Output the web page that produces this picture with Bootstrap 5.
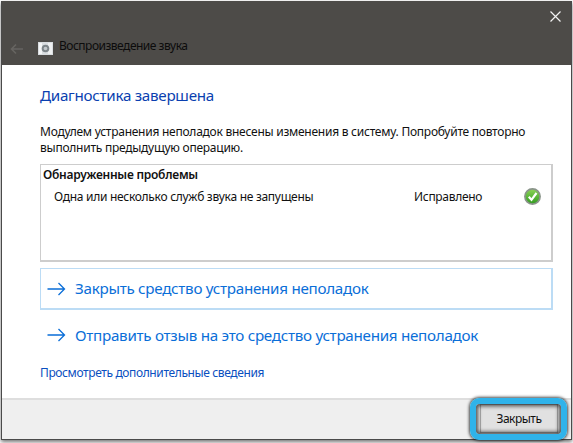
<!DOCTYPE html>
<html lang="ru"><head><meta charset="utf-8">
<link rel="stylesheet" href="https://cdn.jsdelivr.net/npm/bootstrap@5.3.0/dist/css/bootstrap.min.css">
<style>
html,body{margin:0;height:443px;overflow:hidden;background:#fff;font-family:"Noto Sans","Open Sans",sans-serif;}
.wiz{margin:1px 1px 0 1px;height:439px;border:1px solid #4a4a4a;border-top:0;box-shadow:0 2px 4px rgba(0,0,0,.55);}
.wiz-head{height:64px;background:#4d4b48;padding:0 0 6px 8px;position:relative;}
.wiz-close{position:absolute;right:9px;top:9px;width:13px;height:13px;}
.wiz-title{font-size:12px;color:#0c0c0c;margin-left:6px;letter-spacing:-.5px;}
.wiz-ico{width:15px;height:13px;margin-left:14px;}
.wiz-main{padding:20px 18px 0 38px;}
.wiz-h{font-size:15.2px;line-height:20px;color:#0a3fb0;margin:0 0 19px;letter-spacing:-.28px;}
.wiz-p{font-size:12px;line-height:16px;color:#111;margin:0 0 8px;letter-spacing:-.25px;}
.wiz-box{height:98px;border:2px solid #cdcdcd;border-width:1px 2px 2px 1px;padding:2px 0 0 2px;font-size:12px;color:#111;letter-spacing:-.29px;}
.wiz-box-h{font-weight:600;line-height:16px;letter-spacing:-.25px;}
.wiz-row{padding:5px 10px 0 11px;line-height:16px;}
.wiz-fix{width:110px;letter-spacing:-.3px;}
.wiz-link{height:41px;margin-top:5px;padding-left:6px;font-size:15.2px;color:#0a6ed8;border:2px solid transparent;border-width:1px 2px 2px 1px;text-decoration:none;letter-spacing:-.28px;}
.wiz-link.is-hot{border-color:#bcdcf5;margin-top:6px;height:42px;}
.wiz-arrow{width:19px;height:14px;margin-right:9px;}
.wiz-more{font-size:12px;color:#0a4fc0;display:block;margin-top:9px;line-height:16px;text-decoration:none;letter-spacing:-.38px;}
.wiz-foot{height:41px;background:#efefef;border-top:2px solid #dedede;padding:0 13px 0 0;}
.wiz-btn{position:relative;width:78px;height:29px;background:#e1e1e1;border:1px solid #adadad;font-size:12px;line-height:20px;color:#111;padding:0;border-radius:0;margin-top:4px;letter-spacing:-.5px;}
.wiz-btn::after{content:"";position:absolute;left:-11px;right:-10px;top:-7px;bottom:-8px;border:6px solid #2fb3ea;border-radius:9px;box-shadow:0 0 3px 1px rgba(0,0,0,.7),inset 0 0 4px 2px rgba(0,0,0,.7);}
</style></head>
<body>
<div class="wiz d-flex flex-column">
  <div class="wiz-head d-flex align-items-end">
    <svg class="wiz-close" viewBox="0 0 13 13"><path d="M1.500 1.500l10 10M11.500 1.500l-10 10" stroke="#f2f2f2" stroke-width="1.200" fill="none"/></svg>
    <svg width="14" height="12" viewBox="0 0 14 12" class="mb-1"><path d="M13 6H1.500M6 1.500L1.500 6 6 10.500" stroke="#666461" stroke-width="1.600" fill="none"/></svg>
    <svg class="wiz-ico mb-1" viewBox="0 0 15 13"><rect width="15" height="13" fill="#d9dde0"/><rect x="1" y="1" width="3" height="11" fill="#f4f6f7"/><rect x="10" y="1" width="4" height="11" fill="#eef0f1"/><circle cx="7.500" cy="6.500" r="3.800" fill="#7d8589"/><circle cx="7.500" cy="6.500" r="1.800" fill="#c2c7ca"/></svg>
    <span class="wiz-title mb-1">Воспроизведение звука</span>
  </div>
  <div class="wiz-main flex-grow-1">
    <h1 class="wiz-h fw-normal">Диагностика завершена</h1>
    <p class="wiz-p">Модулем устранения неполадок внесены изменения в систему. Попробуйте повторно выполнить предыдущую операцию.</p>
    <div class="wiz-box">
      <div class="wiz-box-h">Обнаруженные проблемы</div>
      <div class="wiz-row d-flex align-items-center">
        <span class="flex-grow-1">Одна или несколько служб звука не запущены</span>
        <span class="wiz-fix">Исправлено</span>
        <svg width="17" height="17" viewBox="0 0 17 17"><defs><linearGradient id="g" x1="0" y1="0" x2="0" y2="1"><stop offset="0" stop-color="#8fd45a"/><stop offset="1" stop-color="#2f9a1e"/></linearGradient></defs><circle cx="8.500" cy="8.500" r="7.600" fill="url(#g)" stroke="#8a948a" stroke-width="1.700"/><path d="M4.800 8.800l2.700 3L12.500 5" stroke="#fff" stroke-width="2.200" fill="none"/></svg>
      </div>
    </div>
    <a class="wiz-link is-hot d-flex align-items-center" href="#"><svg class="wiz-arrow" viewBox="0 0 18 14"><path d="M0 7h17M11 1l6 6-6 6" stroke="#0a6ed8" stroke-width="1.300" fill="none"/></svg>Закрыть средство устранения неполадок</a>
    <a class="wiz-link d-flex align-items-center" href="#"><svg class="wiz-arrow" viewBox="0 0 18 14"><path d="M0 7h17M11 1l6 6-6 6" stroke="#0a6ed8" stroke-width="1.300" fill="none"/></svg>Отправить отзыв на это средство устранения неполадок</a>
    <a class="wiz-more" href="#">Просмотреть дополнительные сведения</a>
  </div>
  <div class="wiz-foot d-flex justify-content-end">
    <button class="wiz-btn btn" type="button">Закрыть</button>
  </div>
</div>
<script src="https://cdn.jsdelivr.net/npm/bootstrap@5.3.0/dist/js/bootstrap.bundle.min.js"></script>
</body></html>
